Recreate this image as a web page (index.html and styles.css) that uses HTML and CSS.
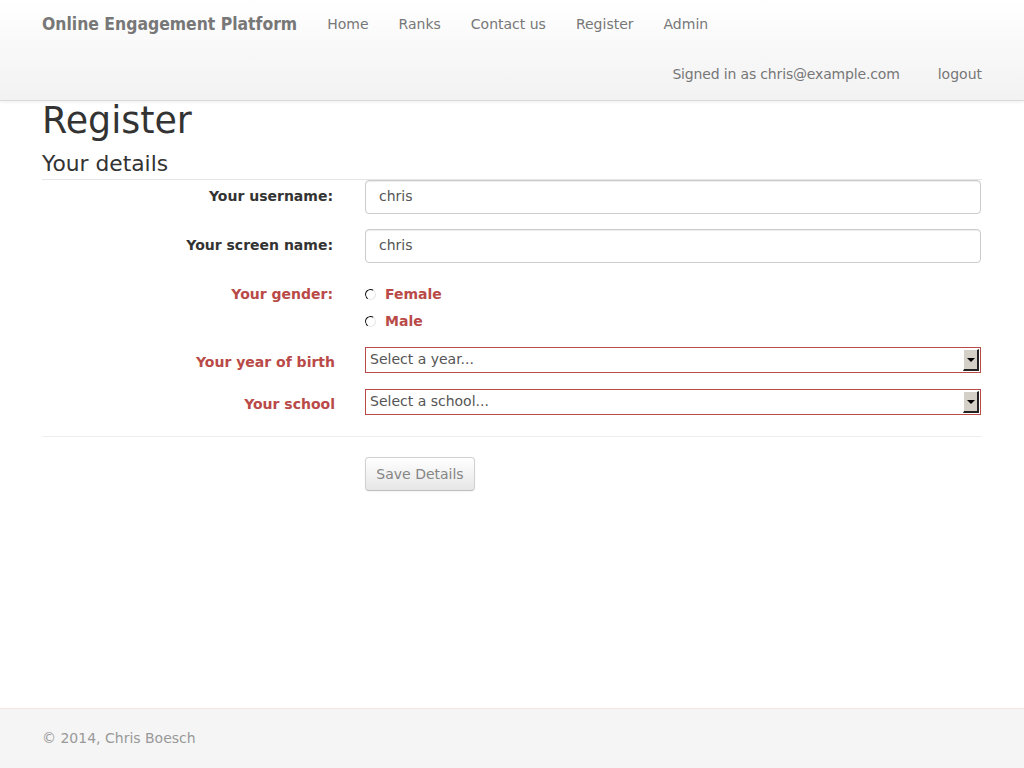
FILE: index.html
```html
<!DOCTYPE html>
<html lang="en">
<head>
<meta charset="utf-8">
<title>Register</title>
<link rel="stylesheet" href="styles.css">
</head>
<body>
<header class="navbar">
  <div class="container">
    <div class="nav-row">
      <a class="brand" href="#">Online Engagement Platform</a>
      <nav class="nav">
        <a href="#">Home</a>
        <a href="#">Ranks</a>
        <a href="#">Contact us</a>
        <a href="#">Register</a>
        <a href="#">Admin</a>
      </nav>
    </div>
    <div class="nav-row nav-right">
      <span class="nav-text">Signed in as chris@example.com</span>
      <a class="logout" href="#">logout</a>
    </div>
  </div>
</header>

<main class="container main">
  <h1 class="title">Register</h1>
  <form class="form">
    <div class="legend">Your details</div>
    <div class="grid">
      <label class="label">Your username:</label>
      <div class="control"><input class="input" type="text" value="chris"></div>

      <label class="label">Your screen name:</label>
      <div class="control"><input class="input" type="text" value="chris"></div>

      <label class="label error label-top">Your gender:</label>
      <div class="control radios">
        <label class="radio error"><input type="radio" name="g"><span>Female</span></label>
        <label class="radio error"><input type="radio" name="g"><span>Male</span></label>
      </div>

      <label class="label error label-sel">Your year of birth</label>
      <div class="control"><div class="select"><span class="select-text">Select a year...</span><span class="select-btn"></span></div></div>

      <label class="label error label-sel label-school">Your school</label>
      <div class="control control-school"><div class="select"><span class="select-text">Select a school...</span><span class="select-btn"></span></div></div>
    </div>
    <div class="actions">
      <button type="button" class="btn">Save Details</button>
    </div>
  </form>
</main>

<footer class="footer">
  <div class="container">© 2014, Chris Boesch</div>
</footer>
</body>
</html>
```

FILE: styles.css
```css
* { box-sizing: border-box; }
html, body { margin: 0; padding: 0; }
body {
  font-family: "DejaVu Sans", "Liberation Sans", sans-serif;
  font-size: 14px;
  line-height: 20px;
  color: #333;
  background: #fff;
  min-height: 100vh;
  display: flex;
  flex-direction: column;
}
a { text-decoration: none; }
.container { width: 940px; margin: 0 auto; }

.navbar {
  height: 101px;
  background: linear-gradient(#ffffff, #f2f2f2);
  border-bottom: 1px solid #d9d9d9;
  box-shadow: 0 1px 4px rgba(0,0,0,0.065);
}
.nav-row { display: flex; align-items: center; height: 48px; }
.brand {
  color: #777;
  font-family: "DejaVu Sans Condensed", "DejaVu Sans", sans-serif;
  font-stretch: condensed;
  font-weight: bold;
  font-size: 17.4px;
  padding-right: 15px;
}
.nav { display: flex; }
.nav a { color: #777; padding: 0 15px; }
.nav-right { justify-content: flex-end; height: 52px; }
.nav-text { color: #777; letter-spacing: -0.16px; }
.logout { color: #777; margin-left: 38px; }

.main { flex: 1; }
.title {
  font-size: 36.4px;
  line-height: 40px;
  font-weight: normal;
  margin: 0 0 8px;
  color: #333;
}
.legend {
  font-size: 21.8px;
  line-height: 30px;
  color: #333;
  border-bottom: 1px solid #e5e5e5;
}
.grid {
  display: grid;
  grid-template-columns: 291px 1fr;
  column-gap: 32px;
  row-gap: 15px;
  align-items: start;
}
.label {
  text-align: right;
  font-weight: bold;
  font-size: 14px;
  line-height: 20px;
  padding-top: 6px;
  color: #333;
}
.error { color: #b94a48; }
.label-top { padding-top: 6px; }
.label-sel { padding-top: 5px; margin-right: -2px; }
.label-school, .control-school { margin-top: 1px; }
.input {
  display: block;
  width: 616px;
  height: 34px;
  padding: 5px 13px 7px;
  border: 1px solid #ccc;
  border-radius: 4px;
  font: 14px/20px "DejaVu Sans", sans-serif;
  color: #555;
  box-shadow: inset 0 1px 1px rgba(0,0,0,0.075);
  background: #fff;
}
.radios { display: flex; flex-direction: column; padding-top: 6px; padding-bottom: 1px; gap: 7px; }
.radio {
  display: flex;
  align-items: center;
  font-weight: bold;
  height: 20px;
}
.radio input {
  appearance: none;
  -webkit-appearance: none;
  width: 11px;
  height: 11px;
  margin: 0 9px 0 0;
  border-radius: 50%;
  border: 1.5px solid;
  border-color: #111 #e6e6e6 #e6e6e6 #111;
  background: #fff;
  transform: rotate(-10deg);
}
.select {
  position: relative;
  width: 616px;
  height: 26px;
  border: 1px solid #b94a48;
  background: #fff;
  padding: 0 4px;
  color: #555;
  font-size: 14px;
  line-height: 22px;
}
.select-text { display: block; }
.select-btn {
  position: absolute;
  right: 1px;
  top: 1px;
  width: 16px;
  height: 22px;
  background: #d4d0c8;
  border-top: 1px solid #fff;
  border-left: 1px solid #fff;
  border-right: 2px solid #222;
  border-bottom: 2px solid #222;
}
.select-btn::after {
  content: "";
  position: absolute;
  left: 3px;
  top: 8px;
  border-left: 4px solid transparent;
  border-right: 4px solid transparent;
  border-top: 4px solid #000;
}
.actions {
  border-top: 1px solid #eee;
  margin-top: 21px;
  padding: 20px 0 20px 323px;
}
.btn {
  height: 34px;
  width: 110px;
  padding: 0;
  font: 14px/20px "DejaVu Sans", sans-serif;
  color: #858585;
  background: linear-gradient(#ffffff, #e6e6e6);
  border: 1px solid #d0d0d0;
  border-bottom-color: #bfbfbf;
  border-radius: 4px;
  box-shadow: inset 0 1px 0 rgba(255,255,255,0.2), 0 1px 2px rgba(0,0,0,0.05);
}
.footer {
  height: 60px;
  background: #f5f5f5;
  border-top: 1px solid #f5e6dd;
  color: #999;
  line-height: 58px;
  margin-top: auto;
}
```
